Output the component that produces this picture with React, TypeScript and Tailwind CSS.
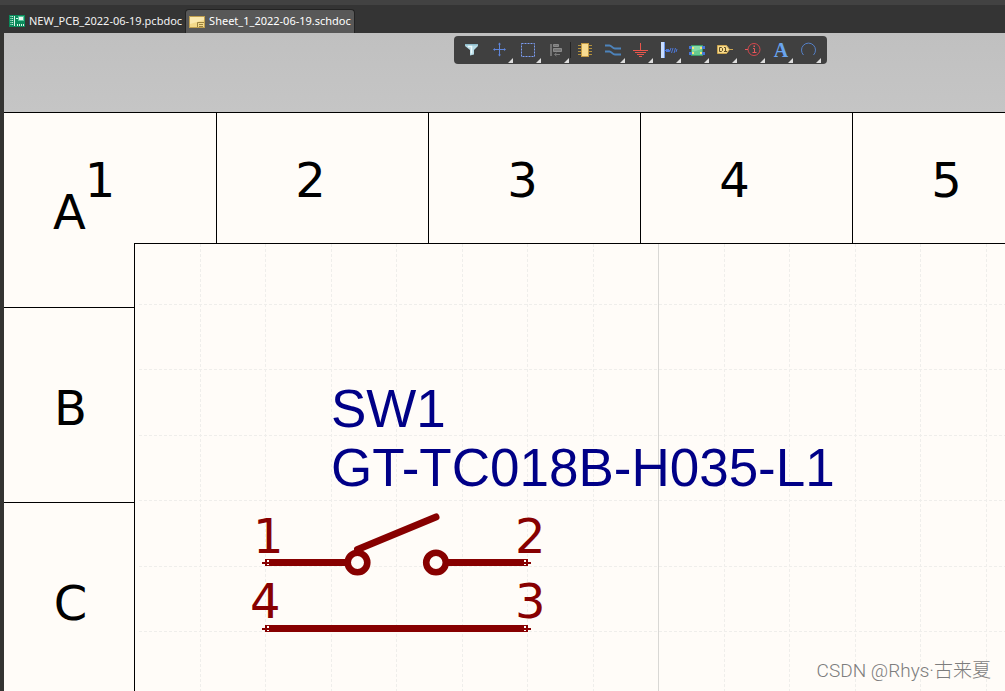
import React from 'react';

const INK = '#870000';

function PcbIcon() {
  return (
    <svg width="16" height="12" viewBox="0 0 16 12" aria-hidden="true">
      <rect width="16" height="12" fill="#0b8a5b" />
      <path d="M1.5 1.5h3M1.5 3.5h3M1.5 5.5h3M1.5 7.5h3M1.5 9.5h3" stroke="#d9f5e8" strokeDasharray="1 .6" />
      <path d="M5.5 1v10" stroke="#d9f5e8" />
      <rect x="9.5" y="1.5" width="5" height="4" fill="#e9fbf3" stroke="#58c79d" />
      <path d="M8.5 9v2M10.5 9v2M12.5 9v2M14.5 9v2" stroke="#d9f5e8" />
      <path d="M7 3.5h2" stroke="#d9f5e8" />
    </svg>
  );
}

function SheetIcon() {
  return (
    <svg width="16" height="12" viewBox="0 0 16 12" aria-hidden="true">
      <rect x=".5" y=".5" width="15" height="11" fill="#f3d98a" stroke="#c09f4e" />
      <path d="M1 1h14v3L1 8z" fill="#fbe9af" />
      <path d="M8.5 11V6.5H15M10 8.500h4M10 10.500h4" stroke="#9b8240" fill="none" />
    </svg>
  );
}

const tools: { label: string; menu: boolean; art: React.ReactNode }[] = [
  {
    label: 'Filter',
    menu: false,
    art: (
      <>
        <path d="M8 8h13v2l-4 4v4.500l-4 1V14L8 10z" fill="#b7dbe6" />
        <path d="M8 8h13v1.500H8z" fill="#8fbccb" />
        <path d="M11 10.500h3.500v7" stroke="#eefafd" strokeWidth="1.500" fill="none" />
      </>
    ),
  },
  {
    label: 'Move',
    menu: true,
    art: (
      <g stroke="#5f86dc" fill="#5f86dc">
        <path d="M14.500 8v12M9 13.500h11" />
        <path d="M14.500 6.500l1.500 2h-3zM14.500 20.500l1.500-2h-3zM8 13.500l2-1.500v3zM21 13.500l-2-1.500v3z" stroke="none" />
      </g>
    ),
  },
  {
    label: 'Select area',
    menu: true,
    art: <rect x="8.500" y="7.500" width="13" height="13" fill="none" stroke="#7c9df2" strokeDasharray="2 1" />,
  },
  {
    label: 'Align',
    menu: true,
    art: (
      <>
        <path d="M9 8h2v12H9z" fill="#747474" />
        <path d="M12.500 8.500h5v2h-5zM12.500 12.500h8v3h-8z" fill="#777" stroke="#8a8a8a" />
        <path d="M14 18.500h5M15.500 17l-2 1.500 2 1.500" stroke="#7c7c7c" fill="none" />
      </>
    ),
  },
  {
    label: 'Place part',
    menu: false,
    art: (
      <>
        <path d="M9 9.500h14M9 12.500h14M9 15.500h14M9 18.500h14" stroke="#b3913d" />
        <rect x="12.500" y="7.500" width="7" height="13" fill="#f8dc92" stroke="#c49b45" />
      </>
    ),
  },
  {
    label: 'Place wire',
    menu: true,
    art: (
      <path
        d="M8 9.500h4.500c2 0 3 3 5.500 3h6M8 15.500h4.500c2 0 3 3 5.500 3h6"
        fill="none"
        stroke="#4d83bb"
        strokeWidth="2"
      />
    ),
  },
  {
    label: 'Place ground',
    menu: true,
    art: (
      <path
        d="M15.500 7v7M8 14.500h15M10 16.500h11M12 18.500h7M14 20.500h3"
        fill="none"
        stroke="#e8564c"
      />
    ),
  },
  {
    label: 'Place harness',
    menu: true,
    art: (
      <>
        <path d="M8 6h4v16H8z" fill="#c9ddff" />
        <path d="M11.500 6v16" stroke="#6c97ea" />
        <path d="M12 14.500h5M16.500 16l1.500-4M18.500 17l1.500-5M21 17l1.500-5M23 16l1-3" stroke="#4d78d8" fill="none" />
        <path d="M13 13h3v3h-3z" fill="#4d78d8" />
      </>
    ),
  },
  {
    label: 'Place sheet symbol',
    menu: true,
    art: (
      <>
        <rect x="10.500" y="9.500" width="11" height="10" fill="#65c990" stroke="#3e9a68" />
        <path d="M11 10h10v3L11 16z" fill="#86dba8" />
        <path d="M8 10h3v3H8zM8 16h3v3H8zM21 10h3v3h-3zM21 16h3v3h-3z" fill="#4677d8" />
        <path d="M11 11h2v2h-2zM11 16h2v2h-2zM19 11h2v2h-2zM19 16h2v2h-2z" fill="#f3e777" />
      </>
    ),
  },
  {
    label: 'Place designator',
    menu: true,
    art: (
      <>
        <path d="M8.500 9.500h9l3 4-3 4h-9z" fill="#f6d98b" stroke="#cda650" />
        <path d="M20 13.500h4" stroke="#cda650" />
        <path d="M10.500 11.500h2l1 1v2l-1 1h-2zM15 11.500h1.500v4M15 15.500h3" fill="none" stroke="#5f4d25" />
      </>
    ),
  },
  {
    label: 'Place directive',
    menu: true,
    art: (
      <>
        <circle cx="17" cy="13.500" r="6" fill="none" stroke="#d4474d" />
        <path d="M8 13.500h3M16 12.500h1.500v4M15.500 16.500h4" stroke="#e8565b" fill="none" />
        <path d="M16.500 9.500h1.500v1.500h-1.500z" fill="#e8565b" />
      </>
    ),
  },
  {
    label: 'Place text',
    menu: true,
    art: (
      <text x="16" y="21" textAnchor="middle" fill="#6aa5ee" className="font-['Liberation_Serif',serif] text-[20px] font-bold">
        A
      </text>
    ),
  },
  {
    label: 'Place arc',
    menu: true,
    art: <path d="M10.500 19a7 7 0 1 1 10 0" fill="none" stroke="#5581c8" />,
  },
];

function Toolbar() {
  return (
    <div role="toolbar" aria-label="Placement tools" className="flex h-7 w-max rounded bg-[#404040] pr-1.5 pl-[3px]">
      {tools.map((tool, i) => (
        <button key={tool.label} type="button" aria-label={tool.label} className="size-7">
          <svg width="28" height="28" viewBox="0 0 28 28" overflow="visible" aria-hidden="true">
            {tool.art}
            {tool.menu && <path d="M28 22v5h-5z" fill="#dedede" />}
            {i === 4 && <path d="M1.500 6v16" stroke="#242424" />}
          </svg>
        </button>
      ))}
    </div>
  );
}

function PinEnd({ x, y, side }: { x: number; y: number; side: 1 | -1 }) {
  return (
    <g transform={`translate(${x} ${y}) scale(${side} 1)`} shapeRendering="crispEdges">
      <path d="M-1-3.500H4v7H-1zM-4-1H0V1H-4z" fill={INK} />
      <path d="M1-2.500h2v1.500H1zM1 1h2v1.500H1z" fill="#fffcf8" />
    </g>
  );
}

const gridX = [65, 130, 196, 261, 327, 392, 458, 589, 654, 720, 785, 851];
const gridY = [60, 125, 191, 256, 322, 387];

function Schematic() {
  return (
    <>
      <svg width="870" height="448" viewBox="0 0 870 448" className="block" aria-label="Switch symbol">
        <g stroke="#efeeeb" strokeDasharray="3 2">
          {gridX.map((x) => (
            <path key={x} d={`M${x + 0.5} 0V448`} />
          ))}
          {gridY.map((y) => (
            <path key={y} d={`M4 ${y + 0.5}H870`} />
          ))}
        </g>
        <path d="M523.500 0V448" stroke="#d9d8d5" />
        <g stroke={INK} strokeWidth="7" fill="none">
          <path d="M134 318.500H212M312 318.500H390M134 384.500H390" />
          <path d="M222.500 305.500L301 273" strokeLinecap="round" />
          <circle cx="222.500" cy="318.500" r="9.800" fill="#fffcf8" strokeWidth="6.600" />
          <circle cx="301" cy="318.500" r="9.800" fill="#fffcf8" strokeWidth="6.600" />
        </g>
        <PinEnd x={131} y={318.5} side={1} />
        <PinEnd x={392} y={318.5} side={-1} />
        <PinEnd x={131} y={384.5} side={1} />
        <PinEnd x={392} y={384.5} side={-1} />
      </svg>
      <div className="absolute top-[135px] left-[196px] font-['Liberation_Sans',Arial,sans-serif] text-[53px] leading-[59px] whitespace-nowrap text-[#000087]">
        <p>SW1</p>
        <p>GT-TC018B-H035-L1</p>
      </div>
      <span className="absolute top-[268px] left-[118px] text-5xl leading-none text-[#870000]">1</span>
      <span className="absolute top-[333px] left-[115px] text-5xl leading-none text-[#870000]">4</span>
      <span className="absolute top-[268px] left-[380px] text-5xl leading-none text-[#870000]">2</span>
      <span className="absolute top-[333px] left-[380px] text-5xl leading-none text-[#870000]">3</span>
    </>
  );
}

export default function App() {
  return (
    <div className="flex h-screen flex-col overflow-hidden bg-[#343432] font-['DejaVu_Sans',Verdana,sans-serif]">
      <nav
        aria-label="Open documents"
        className="flex h-[33px] shrink-0 items-end border-t-[5px] border-[#424242] bg-[#343434] pl-1 font-['Noto_Sans',sans-serif] text-[11px] text-[#f2f2f2]"
      >
        <button type="button" className="flex h-6 items-center gap-1 pr-[3px] pl-[5px] whitespace-nowrap">
          <PcbIcon />
          NEW_PCB_2022-06-19.pcbdoc
        </button>
        <button
          type="button"
          className="flex h-6 items-center gap-1 rounded-t border border-b-0 border-[#232323] bg-[#585858] px-[3px] whitespace-nowrap text-white"
        >
          <SheetIcon />
          Sheet_1_2022-06-19.schdoc
        </button>
      </nav>

      <main className="ml-1 flex min-h-0 flex-1 flex-col overflow-hidden bg-[#c4c4c4]">
        <div className="h-[79px] shrink-0 bg-linear-to-b from-[#c0c0c0] to-[#c5c5c5] pt-[3px] pl-[450px]">
          <Toolbar />
        </div>

        <section
          aria-label="Sheet"
          className="grid shrink-0 grid-cols-[131px_82px_212px_212px_212px_212px] grid-rows-[131px_64px_195px_195px] border-t border-black bg-[#fffcf8] text-5xl leading-none text-black"
        >
          <div className="col-span-2 col-start-1 row-start-1 flex items-center justify-center border-r border-black pt-0.5 pr-5">1</div>
          {[2, 3, 4, 5].map((n) => (
            <div key={n} className="row-start-1 flex items-center justify-center border-r border-b border-black pt-1 pr-6">
              {n}
            </div>
          ))}
          <div className="col-start-1 row-span-2 row-start-1 flex items-center justify-center border-b border-black pt-1">A</div>
          <div className="col-start-1 row-start-3 flex items-center justify-center border-b border-black pt-1.5 pl-0.5">B</div>
          <div className="col-start-1 row-start-4 flex items-center justify-center border-b border-black pt-1.5 pl-0.5">C</div>
          <div className="relative col-start-2 -col-end-1 row-start-2 row-end-5 -mt-px -ml-px overflow-hidden border-t border-l border-black">
            <Schematic />
          </div>
        </section>
      </main>

      <p className="absolute right-3.5 bottom-1.5 font-['Roboto','Noto_Sans_CJK_SC',sans-serif] text-[19px] leading-7 font-light whitespace-nowrap text-[#7d7d7d]">
        CSDN @Rhys·古来夏
      </p>
    </div>
  );
}
